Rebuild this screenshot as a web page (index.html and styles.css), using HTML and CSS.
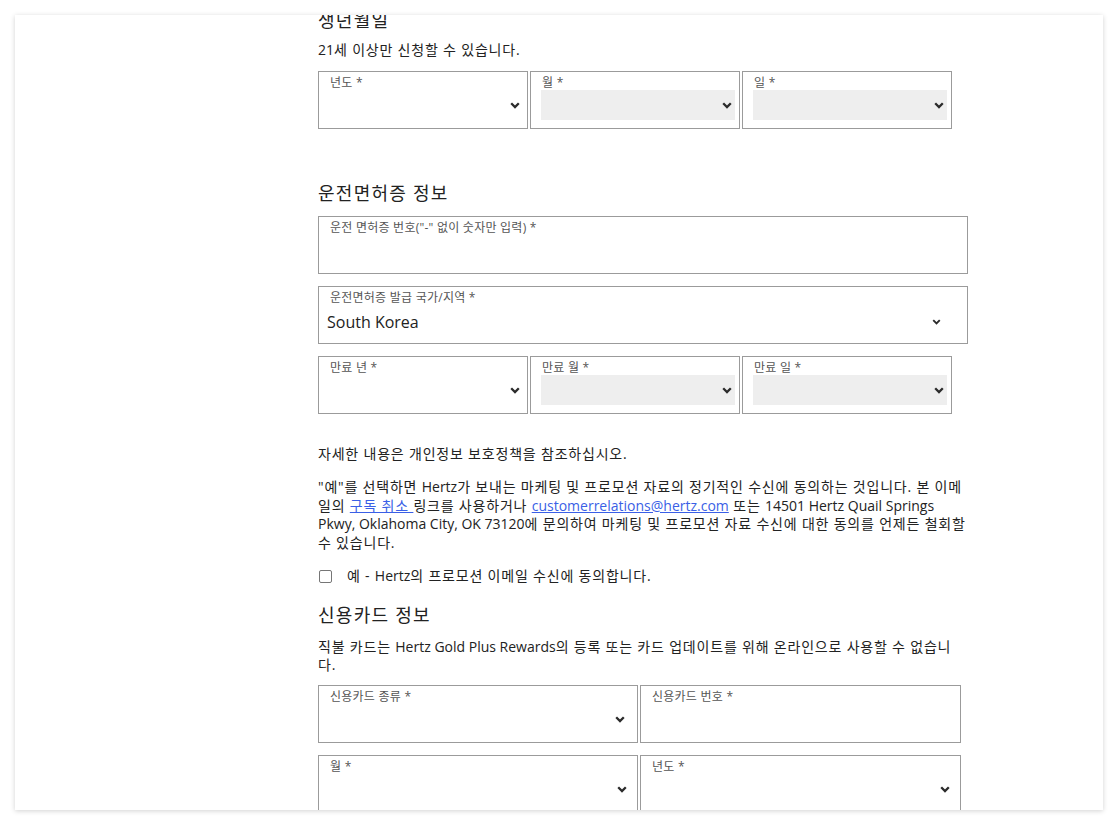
FILE: index.html
```html
<!DOCTYPE html>
<html lang="ko">
<head>
<meta charset="utf-8">
<title>Hertz Gold Plus Rewards</title>
<link rel="stylesheet" href="styles.css">
</head>
<body>
<div class="card">
  <div class="form">
    <h2 class="heading">생년월일</h2>
    <p class="note note-dob"><span class="en">21</span>세 이상만 신청할 수 있습니다.</p>
    <div class="row3 mt11">
      <div class="field">
        <span class="label">년도 *</span>
        <div class="control"><svg class="chev" viewBox="0 0 10 7"><path d="M1.2 1.3 L5 5.1 L8.8 1.3"/></svg></div>
      </div>
      <div class="field">
        <span class="label">월 *</span>
        <div class="control disabled"><svg class="chev" viewBox="0 0 10 7"><path d="M1.2 1.3 L5 5.1 L8.8 1.3"/></svg></div>
      </div>
      <div class="field">
        <span class="label">일 *</span>
        <div class="control disabled"><svg class="chev" viewBox="0 0 10 7"><path d="M1.2 1.3 L5 5.1 L8.8 1.3"/></svg></div>
      </div>
    </div>

    <h2 class="heading h-license">운전면허증 정보</h2>
    <div class="field full mt11">
      <span class="label">운전 면허증 번호("-" 없이 숫자만 입력) *</span>
    </div>
    <div class="field full mt12">
      <span class="label">운전면허증 발급 국가/지역 *</span>
      <div class="control country"><span class="value">South Korea</span><svg class="chev small" viewBox="0 0 10 7"><path d="M1.2 1.3 L5 5.1 L8.8 1.3"/></svg></div>
    </div>
    <div class="row3 mt12">
      <div class="field">
        <span class="label">만료 년 *</span>
        <div class="control"><svg class="chev" viewBox="0 0 10 7"><path d="M1.2 1.3 L5 5.1 L8.8 1.3"/></svg></div>
      </div>
      <div class="field">
        <span class="label">만료 월 *</span>
        <div class="control disabled"><svg class="chev" viewBox="0 0 10 7"><path d="M1.2 1.3 L5 5.1 L8.8 1.3"/></svg></div>
      </div>
      <div class="field">
        <span class="label">만료 일 *</span>
        <div class="control disabled"><svg class="chev" viewBox="0 0 10 7"><path d="M1.2 1.3 L5 5.1 L8.8 1.3"/></svg></div>
      </div>
    </div>

    <p class="note privacy">자세한 내용은 개인정보 보호정책을 참조하십시오.</p>
    <p class="para">"예"를 선택하면 <span class="en">Hertz</span>가 보내는 마케팅 및 프로모션 자료의 정기적인 수신에 동의하는 것입니다. 본 이메<br>일의 <a href="#" class="link">구독 취소 </a>링크를 사용하거나 <a href="#" class="link en">customerrelations@hertz.com</a> 또는 <span class="en">14501 Hertz Quail Springs</span><br><span class="en">Pkwy, Oklahoma City, OK 73120</span>에 문의하여 마케팅 및 프로모션 자료 수신에 대한 동의를 언제든 철회할<br>수 있습니다.</p>
    <label class="check">
      <span class="box"></span>
      <span>예 - <span class="en">Hertz</span>의 프로모션 이메일 수신에 동의합니다.</span>
    </label>

    <h2 class="heading h-card">신용카드 정보</h2>
    <p class="para2">직불 카드는 <span class="en">Hertz Gold Plus Rewards</span>의 등록 또는 카드 업데이트를 위해 온라인으로 사용할 수 없습니<br>다.</p>
    <div class="row2 mt11">
      <div class="field">
        <span class="label">신용카드 종류 *</span>
        <div class="control wide"><svg class="chev" viewBox="0 0 10 7"><path d="M1.2 1.3 L5 5.1 L8.8 1.3"/></svg></div>
      </div>
      <div class="field">
        <span class="label">신용카드 번호 *</span>
      </div>
    </div>
    <div class="row2 mt12">
      <div class="field">
        <span class="label">월 *</span>
        <div class="control wide2"><svg class="chev" viewBox="0 0 10 7"><path d="M1.2 1.3 L5 5.1 L8.8 1.3"/></svg></div>
      </div>
      <div class="field">
        <span class="label">년도 *</span>
        <div class="control wide2"><svg class="chev" viewBox="0 0 10 7"><path d="M1.2 1.3 L5 5.1 L8.8 1.3"/></svg></div>
      </div>
    </div>
  </div>
</div>
</body>
</html>
```

FILE: styles.css
```css
* { box-sizing: border-box; }

html, body {
  margin: 0;
  padding: 0;
  background: #ffffff;
}

body {
  font-family: "Open Sans", "Noto Sans CJK KR", sans-serif;
  color: #222222;
  width: 1118px;
  height: 825px;
  overflow: hidden;
}

.card {
  margin: 15px 0 0 15px;
  width: 1088px;
  height: 795px;
  background: #ffffff;
  box-shadow: 0 1px 5px rgba(0, 0, 0, 0.18);
  overflow: hidden;
}

.form {
  margin-top: -7px;
  padding-left: 303px;
  width: 953px;
  letter-spacing: 0.05em;
}

.en { letter-spacing: 0; }

.heading {
  margin: 0;
  font-size: 18px;
  line-height: 24px;
  font-weight: 400;
  letter-spacing: 0.07em;
  color: #222222;
}

.note {
  margin: 0;
  font-size: 14px;
  line-height: 20px;
}

.note-dob { margin-top: 8px; }

.mt11 { margin-top: 11px; }
.mt12 { margin-top: 12px; }

.row3 {
  display: grid;
  grid-template-columns: 210px 210px 210px;
  column-gap: 2px;
}

.row2 {
  display: grid;
  grid-template-columns: 320px 321px;
  column-gap: 2px;
}

.field {
  position: relative;
  height: 58px;
  border: 1px solid #9b9b9b;
  padding: 3px 4px 8px 10px;
  background: #ffffff;
}

.field.full { width: 650px; }

.label {
  display: block;
  margin-left: 1px;
  font-size: 12px;
  line-height: 15px;
  letter-spacing: 0.02em;
  color: #555555;
  white-space: nowrap;
}

.control {
  height: 30px;
  display: flex;
  align-items: center;
  justify-content: flex-end;
  padding-right: 3px;
}

.control.disabled { background: #eeeeee; }

.control.wide { padding-right: 8px; }
.control.wide2 { padding-right: 6px; }

.control.country {
  justify-content: space-between;
  padding-right: 22px;
  height: 34px;
}

.value {
  margin-left: -2px;
  font-size: 16px;
  letter-spacing: 0;
  color: #222222;
}

.chev {
  width: 10px;
  height: 7px;
  fill: none;
  stroke: #2b2b2b;
  stroke-width: 2.3;
  stroke-linecap: butt;
  stroke-linejoin: miter;
}

.chev.small {
  width: 9px;
  height: 6px;
  stroke-width: 2.2;
}

.privacy { margin-top: 30px; }

.para {
  margin: 14px 0 0 0;
  width: 680px;
  white-space: nowrap;
  font-size: 14px;
  line-height: 18.5px;
}

.link {
  color: #3a5fe6;
  text-decoration: underline;
}

.check {
  margin-top: 14px;
  display: flex;
  align-items: center;
  font-size: 14px;
  line-height: 20px;
}

.check .box {
  width: 13px;
  height: 13px;
  margin-left: 1px;
  margin-right: 15px;
  border: 1px solid #767676;
  border-radius: 2px;
  background: #ffffff;
}

.h-license { margin-top: 52px; }
.h-card { margin-top: 17px; }

.para2 {
  margin: 11px 0 0 0;
  width: 680px;
  white-space: nowrap;
  font-size: 14px;
  line-height: 18px;
}
```
